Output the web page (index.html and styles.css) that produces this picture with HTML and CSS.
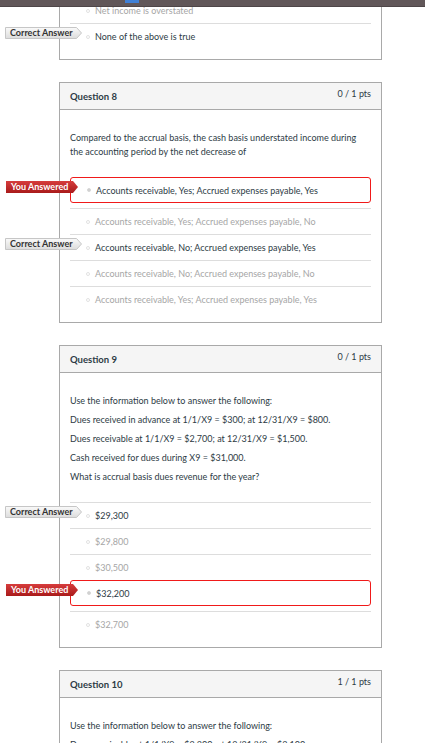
FILE: index.html
```html
<!DOCTYPE html>
<html lang="en">
<head>
<meta charset="utf-8">
<title>Quiz results</title>
<link rel="stylesheet" href="styles.css">
</head>
<body>
<div class="topbar"><span class="topbar-mark"></span></div>
<main class="quiz">
  <section class="card card-partial">
    <div class="card-body">
      <div class="answers">
        <div class="answer muted"><span class="radio"></span><span>Net income is overstated</span></div>
        <div class="answer">
          <span class="tag tag-correct"><svg class="tag-shape" width="77" height="12" viewBox="0 0 77 12"><defs><linearGradient id="gc1" x1="0" y1="0" x2="0" y2="1"><stop offset="0" stop-color="#fafafa"/><stop offset="1" stop-color="#dcdcdc"/></linearGradient></defs><polygon points="0.5,0.5 71.5,0.5 76.5,6 71.5,11.5 0.5,11.5" fill="url(#gc1)" stroke="#c6c6c6"/></svg><span class="tag-text">Correct Answer</span></span>
          <span class="radio"></span><span>None of the above is true</span>
        </div>
      </div>
    </div>
  </section>

  <section class="card">
    <header class="card-header"><h2 class="q-title">Question 8</h2><span class="q-pts">0 / 1 pts</span></header>
    <div class="card-body">
      <p class="q-text">Compared to the accrual basis, the cash basis understated income during the accounting period by the net decrease of</p>
      <div class="answers">
        <div class="answer selected">
          <span class="tag tag-you"><svg class="tag-shape" width="72" height="12" viewBox="0 0 72 12"><defs><linearGradient id="gy1" x1="0" y1="0" x2="0" y2="1"><stop offset="0" stop-color="#d63c3c"/><stop offset="1" stop-color="#a91b1b"/></linearGradient></defs><polygon points="0,0 67,0 72,6 67,12 0,12" fill="url(#gy1)"/></svg><span class="tag-text">You Answered</span></span>
          <span class="radio checked"></span><span>Accounts receivable, Yes; Accrued expenses payable, Yes</span>
        </div>
        <div class="answer muted"><span class="radio"></span><span>Accounts receivable, Yes; Accrued expenses payable, No</span></div>
        <div class="answer">
          <span class="tag tag-correct"><svg class="tag-shape" width="77" height="12" viewBox="0 0 77 12"><defs><linearGradient id="gc2" x1="0" y1="0" x2="0" y2="1"><stop offset="0" stop-color="#fafafa"/><stop offset="1" stop-color="#dcdcdc"/></linearGradient></defs><polygon points="0.5,0.5 71.5,0.5 76.5,6 71.5,11.5 0.5,11.5" fill="url(#gc2)" stroke="#c6c6c6"/></svg><span class="tag-text">Correct Answer</span></span>
          <span class="radio"></span><span>Accounts receivable, No; Accrued expenses payable, Yes</span>
        </div>
        <div class="answer muted"><span class="radio"></span><span>Accounts receivable, No; Accrued expenses payable, No</span></div>
        <div class="answer muted"><span class="radio"></span><span>Accounts receivable, Yes; Accrued expenses payable, Yes</span></div>
      </div>
    </div>
  </section>

  <section class="card">
    <header class="card-header"><h2 class="q-title">Question 9</h2><span class="q-pts">0 / 1 pts</span></header>
    <div class="card-body">
      <p class="q-text">Use the information below to answer the following:</p>
      <p class="q-text">Dues received in advance at 1/1/X9 = $300; at 12/31/X9 = $800.</p>
      <p class="q-text">Dues receivable at 1/1/X9 = $2,700; at 12/31/X9 = $1,500.</p>
      <p class="q-text">Cash received for dues during X9 = $31,000.</p>
      <p class="q-text">What is accrual basis dues revenue for the year?</p>
      <div class="answers">
        <div class="answer">
          <span class="tag tag-correct"><svg class="tag-shape" width="77" height="12" viewBox="0 0 77 12"><defs><linearGradient id="gc3" x1="0" y1="0" x2="0" y2="1"><stop offset="0" stop-color="#fafafa"/><stop offset="1" stop-color="#dcdcdc"/></linearGradient></defs><polygon points="0.5,0.5 71.5,0.5 76.5,6 71.5,11.5 0.5,11.5" fill="url(#gc3)" stroke="#c6c6c6"/></svg><span class="tag-text">Correct Answer</span></span>
          <span class="radio"></span><span>$29,300</span>
        </div>
        <div class="answer muted"><span class="radio"></span><span>$29,800</span></div>
        <div class="answer muted"><span class="radio"></span><span>$30,500</span></div>
        <div class="answer selected">
          <span class="tag tag-you"><svg class="tag-shape" width="72" height="12" viewBox="0 0 72 12"><defs><linearGradient id="gy2" x1="0" y1="0" x2="0" y2="1"><stop offset="0" stop-color="#d63c3c"/><stop offset="1" stop-color="#a91b1b"/></linearGradient></defs><polygon points="0,0 67,0 72,6 67,12 0,12" fill="url(#gy2)"/></svg><span class="tag-text">You Answered</span></span>
          <span class="radio checked"></span><span>$32,200</span>
        </div>
        <div class="answer muted"><span class="radio"></span><span>$32,700</span></div>
      </div>
    </div>
  </section>

  <section class="card">
    <header class="card-header"><h2 class="q-title">Question 10</h2><span class="q-pts">1 / 1 pts</span></header>
    <div class="card-body">
      <p class="q-text">Use the information below to answer the following:</p>
      <p class="q-text">Dues receivable at 1/1/X9 = $2,300; at 12/31/X9 = $3,100.</p>
      <p class="q-text">Cash received for dues during X9 = $24,000.</p>
      <p class="q-text">What is accrual basis dues revenue for the year?</p>
    </div>
  </section>
</main>
</body>
</html>
```

FILE: styles.css
```css
* { box-sizing: border-box; }

html, body {
  margin: 0;
  padding: 0;
  background: #ffffff;
}

body {
  font-family: Lato, "Open Sans", "Liberation Sans", sans-serif;
  font-size: 9px;
  color: #2d3b45;
}

.topbar {
  position: fixed;
  top: 0;
  left: 0;
  right: 0;
  height: 7px;
  background: #615759;
  border-bottom: 1px solid #4e4648;
  z-index: 10;
}

.topbar-mark {
  position: absolute;
  left: 125px;
  top: 0;
  width: 14px;
  height: 3px;
  background: #3f80d6;
}

.quiz {
  margin-left: 59px;
  width: 323px;
}

.card {
  border: 1px solid #a9a9a9;
  margin-bottom: 22px;
  background: #fff;
}

.card-partial {
  border-top: 0;
  margin-top: -3px;
}

.card-header {
  display: flex;
  justify-content: space-between;
  align-items: center;
  height: 27px;
  padding: 0 10px;
  background: #f5f5f5;
  border-bottom: 1px solid #a9a9a9;
}

.q-title {
  margin: 0;
  font-size: 9.5px;
  font-weight: 700;
  color: #2d3b45;
}

.q-pts {
  align-self: flex-start;
  margin-top: 5px;
  font-size: 9px;
  line-height: 12px;
  color: #2d3b45;
}

.card-body {
  padding: 21px 10px 10px;
}

.card-partial .card-body {
  padding-top: 0;
}

.q-text {
  margin: 0 0 5px;
  line-height: 14px;
}

.q-text:last-of-type {
  margin-bottom: 0;
}

.answers {
  margin-top: 18px;
}

.card-partial .answers {
  margin-top: 0;
}

.answer {
  position: relative;
  display: flex;
  align-items: center;
  height: 26px;
  padding-left: 16px;
  border-top: 1px solid #dddddd;
  color: #2d3b45;
}

.answer.muted {
  color: #a6a6a6;
}

.answer.selected {
  height: 26px;
  border: 1px solid #f01a1a;
  border-radius: 3px;
  margin-bottom: 5px;
}

.radio {
  flex: none;
  width: 4px;
  height: 4px;
  margin-right: 5px;
  border: 1px solid #e2e2e2;
  border-radius: 50%;
}

.radio.checked {
  background: #cfcfcf;
  border-color: #d8d8d8;
}

.tag {
  position: absolute;
  top: 3px;
  left: -65px;
  height: 12px;
  display: flex;
  align-items: center;
  padding-left: 5px;
  font-size: 9px;
  font-weight: 700;
  line-height: 12px;
  white-space: nowrap;
}

.tag-correct {
  width: 77px;
  color: #333333;
}

.tag-you {
  width: 72px;
  color: #ffffff;
}

.tag-shape {
  position: absolute;
  left: 0;
  top: 0;
}

.tag-text {
  position: relative;
}
```
